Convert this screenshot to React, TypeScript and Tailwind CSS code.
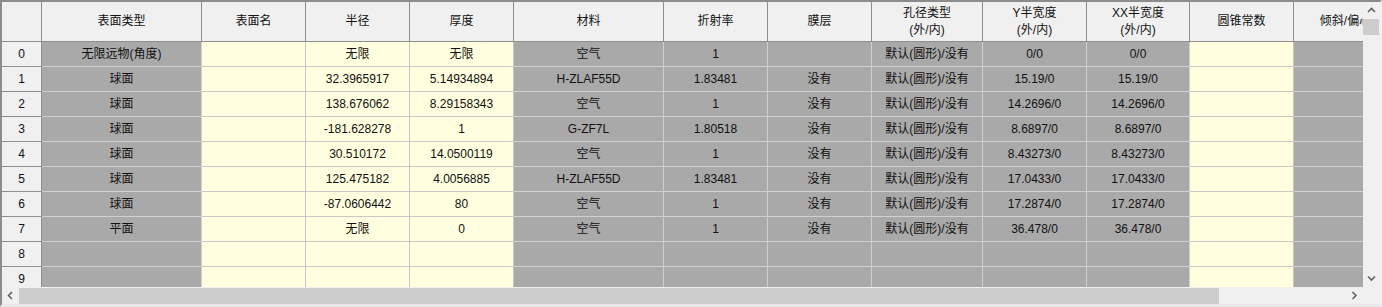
import * as React from 'react';

type Kind = 'head' | 'gray' | 'yellow';

const cols: { w: string; kind: Kind; title: string; sub?: string }[] = [
  { w: 'w-[40px]', kind: 'head', title: '' },
  { w: 'w-[160px]', kind: 'gray', title: '表面类型' },
  { w: 'w-[104px]', kind: 'yellow', title: '表面名' },
  { w: 'w-[104px]', kind: 'yellow', title: '半径' },
  { w: 'w-[104px]', kind: 'yellow', title: '厚度' },
  { w: 'w-[150px]', kind: 'gray', title: '材料' },
  { w: 'w-[104px]', kind: 'gray', title: '折射率' },
  { w: 'w-[104px]', kind: 'gray', title: '膜层' },
  { w: 'w-[111px]', kind: 'gray', title: '孔径类型', sub: '(外/内)' },
  { w: 'w-[104px]', kind: 'gray', title: 'Y半宽度', sub: '(外/内)' },
  { w: 'w-[103px]', kind: 'gray', title: 'XX半宽度', sub: '(外/内)' },
  { w: 'w-[104px]', kind: 'yellow', title: '圆锥常数' },
  { w: 'w-[104px]', kind: 'gray', title: '倾斜/偏心' },
];

const AP = '默认(圆形)/没有';

const rows: string[][] = [
  ['无限远物(角度)', '', '无限', '无限', '空气', '1', '', AP, '0/0', '0/0', '', ''],
  ['球面', '', '32.3965917', '5.14934894', 'H-ZLAF55D', '1.83481', '没有', AP, '15.19/0', '15.19/0', '', ''],
  ['球面', '', '138.676062', '8.29158343', '空气', '1', '没有', AP, '14.2696/0', '14.2696/0', '', ''],
  ['球面', '', '-181.628278', '1', 'G-ZF7L', '1.80518', '没有', AP, '8.6897/0', '8.6897/0', '', ''],
  ['球面', '', '30.510172', '14.0500119', '空气', '1', '没有', AP, '8.43273/0', '8.43273/0', '', ''],
  ['球面', '', '125.475182', '4.0056885', 'H-ZLAF55D', '1.83481', '没有', AP, '17.0433/0', '17.0433/0', '', ''],
  ['球面', '', '-87.0606442', '80', '空气', '1', '没有', AP, '17.2874/0', '17.2874/0', '', ''],
  ['平面', '', '无限', '0', '空气', '1', '没有', AP, '36.478/0', '36.478/0', '', ''],
  ['', '', '', '', '', '', '', '', '', '', '', ''],
  ['', '', '', '', '', '', '', '', '', '', '', ''],
];

const Chevron = ({ dir }: { dir: 'up' | 'down' | 'left' | 'right' }) => {
  const pts = {
    up: '1,6 4.5,2.5 8,6',
    down: '1,2.5 4.5,6 8,2.5',
    left: '6,1 2.5,4.5 6,8',
    right: '2.5,1 6,4.5 2.5,8',
  }[dir];
  return (
    <svg width="9" height="9" viewBox="0 0 9 9">
      <polyline points={pts} fill="none" stroke="#606060" strokeWidth="1.6" />
    </svg>
  );
};

export default function App() {
  return (
    <div
      className="w-[1382px] h-[307px] bg-[#f0f0f0] border-t-2 border-l-2 border-r-2 border-b-[3px] border-t-[#8c8c8c] border-l-[#8c8c8c] border-r-[#f0f0f0] border-b-[#e8e8e8] flex flex-col text-[12px] text-[#111] overflow-hidden"
      style={{ fontFamily: '"Liberation Sans", "Noto Sans CJK SC", sans-serif' }}
    >
      <div className="flex h-[285px]">
        <div className="w-[1361px] overflow-hidden bg-white">
          {/* header */}
          <div className="flex h-[40px]">
            {cols.map((c, i) => (
              <div
                key={i}
                className={`${c.w} shrink-0 h-[40px] bg-[#f0f0f0] border-r border-b border-[#8f8f8f] flex flex-col items-center justify-center leading-[17px] whitespace-nowrap`}
              >
                <span>{c.title}</span>
                {c.sub && <span>{c.sub}</span>}
              </div>
            ))}
          </div>
          {rows.map((r, ri) => (
            <div key={ri} className="flex h-[25px]">
              <div className="w-[40px] shrink-0 h-[25px] bg-[#f0f0f0] border-r border-b border-[#8f8f8f] flex items-center justify-center">
                {ri}
              </div>
              {r.map((v, ci) => {
                const c = cols[ci + 1];
                const bg =
                  c.kind === 'yellow'
                    ? 'bg-[#ffffe0] border-[#c8c8c8]'
                    : 'bg-[#a9a9a9] border-[#d0d0d0]';
                return (
                  <div
                    key={ci}
                    className={`${c.w} ${bg} shrink-0 h-[25px] border-r border-b flex items-center justify-center whitespace-nowrap`}
                  >
                    {v}
                  </div>
                );
              })}
            </div>
          ))}
        </div>
        {/* vertical scrollbar */}
        <div className="w-[17px] bg-[#f0f0f0] flex flex-col">
          <div className="h-[17px] flex items-center justify-center">
            <Chevron dir="up" />
          </div>
          <div className="h-[16px] w-[16px] bg-[#cdcdcd]" />
          <div className="flex-1" />
          <div className="h-[17px] flex items-center justify-center">
            <Chevron dir="down" />
          </div>
        </div>
      </div>
      {/* horizontal scrollbar */}
      <div className="flex h-[17px]">
        <div className="w-[1361px] flex bg-[#f0f0f0]">
          <div className="w-[17px] flex items-center justify-center">
            <Chevron dir="left" />
          </div>
          <div className="w-[1200px] h-[16px] mt-px bg-[#cdcdcd]" />
          <div className="flex-1" />
          <div className="w-[17px] flex items-center justify-center">
            <Chevron dir="right" />
          </div>
        </div>
        <div className="w-[17px] bg-[#f0f0f0]" />
      </div>
    </div>
  );
}
